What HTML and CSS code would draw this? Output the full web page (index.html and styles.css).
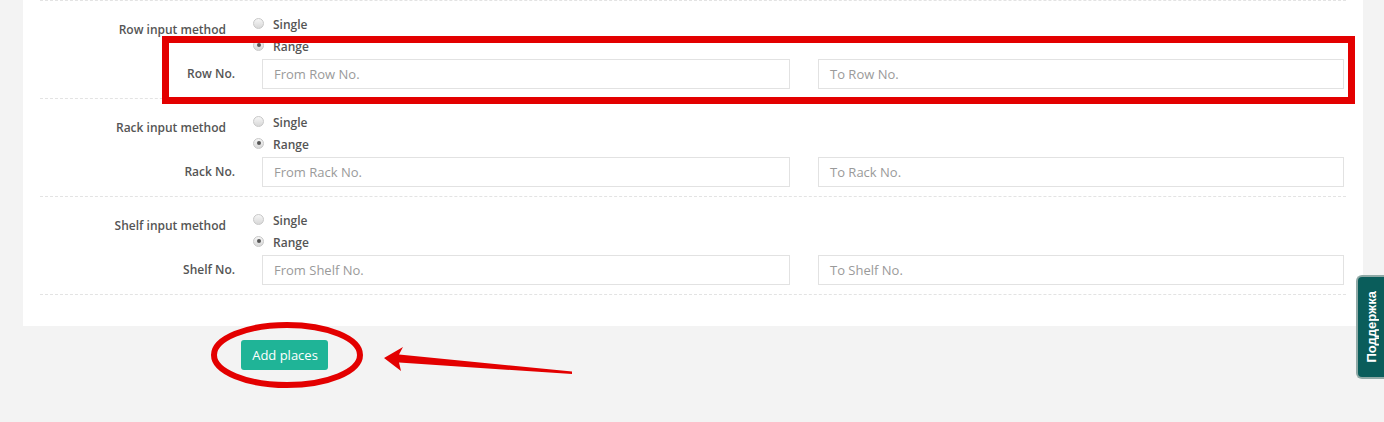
FILE: index.html
```html
<!DOCTYPE html>
<html>
<head>
<meta charset="utf-8">
<link rel="stylesheet" href="styles.css">
</head>
<body>
<div class="page">
  <div class="panel">
    <div class="section">
      <div class="method-row">
        <div class="method-label">Row input method</div>
        <div class="radios">
          <label class="radio"><span class="dot"></span>Single</label>
          <label class="radio"><span class="dot checked"></span>Range</label>
        </div>
      </div>
      <div class="field-row">
        <div class="field-label">Row No.</div>
        <div class="input">From Row No.</div>
        <div class="input">To Row No.</div>
      </div>
    </div>
    <div class="section">
      <div class="method-row">
        <div class="method-label">Rack input method</div>
        <div class="radios">
          <label class="radio"><span class="dot"></span>Single</label>
          <label class="radio"><span class="dot checked"></span>Range</label>
        </div>
      </div>
      <div class="field-row">
        <div class="field-label">Rack No.</div>
        <div class="input">From Rack No.</div>
        <div class="input">To Rack No.</div>
      </div>
    </div>
    <div class="section last">
      <div class="method-row">
        <div class="method-label">Shelf input method</div>
        <div class="radios">
          <label class="radio"><span class="dot"></span>Single</label>
          <label class="radio"><span class="dot checked"></span>Range</label>
        </div>
      </div>
      <div class="field-row">
        <div class="field-label">Shelf No.</div>
        <div class="input">From Shelf No.</div>
        <div class="input">To Shelf No.</div>
      </div>
    </div>
  </div>
  <div class="actions">
    <button class="btn">Add places</button>
  </div>
</div>
<div class="support"><span>Поддержка</span></div>
<svg class="annot" width="1384" height="422" viewBox="0 0 1384 422">
  <rect x="165.5" y="39.5" width="1186" height="61" fill="none" stroke="#e30000" stroke-width="7"/>
  <ellipse cx="287" cy="355" rx="73" ry="30" fill="none" stroke="#e30000" stroke-width="6"/>
  <polygon points="384,358 403,347 399,354.5 572,371.5 572,374 399,362.5 401,371" fill="#e30000"/>
</svg>
</body>
</html>
```
FILE: styles.css
```css
html, body {
  margin: 0;
  padding: 0;
}
body {
  background: #f3f3f3;
  font-family: "Open Sans", "Liberation Sans", sans-serif;
  width: 1384px;
  height: 422px;
  overflow: hidden;
  position: relative;
}
.page {
  padding-left: 23px;
}
.panel {
  width: 1340px;
  background: #fff;
  padding: 0 17px 31px 17px;
  box-sizing: border-box;
}
.section {
  border-top: 1px dashed #e3e3e3;
  height: 98px;
  box-sizing: border-box;
  padding-top: 12px;
}
.section.last {
  border-bottom: 1px dashed #e3e3e3;
  height: 99px;
}
.method-row {
  display: flex;
  align-items: flex-start;
}
.method-label {
  width: 186px;
  text-align: right;
  font-size: 12px;
  font-weight: 600;
  color: #555;
  line-height: 22px;
  margin-top: 6px;
}
.radios {
  margin-left: 27px;
  display: flex;
  flex-direction: column;
}
.radio {
  display: flex;
  align-items: center;
  height: 22px;
  font-size: 12px;
  font-weight: 600;
  color: #555;
}
.dot {
  width: 9px;
  height: 9px;
  border-radius: 50%;
  border: 1px solid #c8c8c8;
  background: linear-gradient(#f6f6f6, #d8d8d8);
  margin-right: 9px;
  position: relative;
  margin-top: -2px;
}
.dot.checked::after {
  content: "";
  position: absolute;
  left: 2.5px;
  top: 2.5px;
  width: 4px;
  height: 4px;
  border-radius: 50%;
  background: #555;
}
.field-row {
  display: grid;
  grid-template-columns: 195px 528px 527px;
  column-gap: 27px;
  align-items: center;
  margin-top: 2px;
}
.field-row .input:last-child {
  margin-left: 1px;
}
.field-label {
  text-align: right;
  font-size: 12px;
  font-weight: 600;
  color: #555;
  padding-bottom: 2px;
}
.input {
  height: 30px;
  box-sizing: border-box;
  border: 1px solid #e2e2e2;
  padding-left: 11px;
  font-size: 13px;
  color: #9a9a9a;
  line-height: 28px;
  background: #fff;
}
.actions {
  padding: 14px 0 0 218px;
}
.btn {
  width: 87px;
  height: 30px;
  border: none;
  border-radius: 3px;
  background: #1fb497;
  color: #fff;
  font-family: "Open Sans", "Liberation Sans", sans-serif;
  font-size: 13px;
  padding: 0 0 0 1px;
}
.support {
  position: absolute;
  left: 1356px;
  top: 275px;
  width: 28px;
  height: 104px;
  box-sizing: border-box;
  background: #0a5d5b;
  border: 2px solid #8fa9a6;
  border-right: none;
  border-radius: 6px 0 0 6px;
  display: flex;
  align-items: center;
  justify-content: center;
}
.support span {
  writing-mode: vertical-rl;
  transform: rotate(180deg);
  color: #fff;
  font-family: "Liberation Sans", Arial, sans-serif;
  font-weight: 700;
  font-size: 13px;
}
.annot {
  position: absolute;
  left: 0;
  top: 0;
  pointer-events: none;
}
```
